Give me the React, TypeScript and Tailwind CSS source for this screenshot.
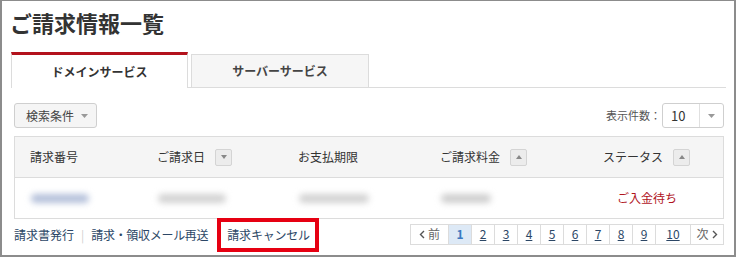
const font = 'font-["Meiryo","Noto_Sans_CJK_JP",sans-serif]';

function SortButton({ dir }: { dir: 'up' | 'down' }) {
  return (
    <span className="ml-[10px] inline-flex h-[17px] w-[17px] items-center justify-center rounded-[2px] border border-[#d4d4d4] bg-[#ececec]">
      <svg width="6" height="4" viewBox="0 0 6 4">
        {dir === 'down' ? (
          <path d="M0 0 L6 0 L3 4 Z" fill="#888" />
        ) : (
          <path d="M0 4 L6 4 L3 0 Z" fill="#888" />
        )}
      </svg>
    </span>
  );
}

function Caret() {
  return (
    <svg width="7" height="4" viewBox="0 0 7 4">
      <path d="M0 0 L7 0 L3.5 4 Z" fill="#999" />
    </svg>
  );
}

function Chevron({ left }: { left?: boolean }) {
  return (
    <svg width="6" height="9" viewBox="0 0 6 9">
      <path
        d={left ? 'M5 1 L1.5 4.5 L5 8' : 'M1 1 L4.5 4.5 L1 8'}
        fill="none"
        stroke="#555"
        strokeWidth="1.4"
      />
    </svg>
  );
}

const columns = [
  { label: '請求番号', w: 'w-[127px]' },
  { label: 'ご請求日', w: 'w-[141px]', sort: 'down' as const },
  { label: 'お支払期限', w: 'w-[142px]' },
  { label: 'ご請求料金', w: 'w-[163px]', sort: 'up' as const },
  { label: 'ステータス', w: 'flex-1', sort: 'up' as const },
];

const pages = ['1', '2', '3', '4', '5', '6', '7', '8', '9', '10'];

export default function App() {
  return (
    <div
      className={`${font} h-[257px] w-[736px] overflow-hidden border-2 border-t border-[#8c8c8c] bg-white pl-[8px] pt-[6px] text-[#333]`}
    >
      <h1 className="h-[30px] text-[22px] font-bold leading-[30px] text-[#333]">ご請求情報一覧</h1>

      {/* Tabs */}
      <div className="ml-[1px] mt-[16px] flex h-[35px] w-[715px] items-end border-b border-[#dcdcdc]">
        <div className="-mb-px flex h-[36px] w-[177px] items-center justify-center border-x border-t-[3px] border-x-[#dcdcdc] border-t-[#b3121c] bg-white text-[12px] font-bold">
          ドメインサービス
        </div>
        <div className="ml-[3px] flex h-[33px] w-[178px] items-center justify-center border-x border-t border-[#dcdcdc] bg-[#f6f6f6] text-[12px] font-bold text-[#444]">
          サーバーサービス
        </div>
      </div>

      <div className="ml-[4px] w-[710px]">
        {/* Filters */}
        <div className="mt-[15px] flex h-[25px] items-center justify-between">
          <button className="flex h-[25px] items-center gap-[7px] rounded-[3px] border border-[#cfcfcf] bg-[#f5f5f5] pl-[11px] pr-[8px] text-[12px] text-[#444]">
            検索条件
            <Caret />
          </button>
          <div className="flex items-center">
            <span className="text-[11px] text-[#555]">表示件数：</span>
            <div className="ml-[1px] flex h-[25px] w-[62px] items-center rounded-[3px] border border-[#cfcfcf] bg-white">
              <span className="flex-1 pl-[8px] text-[13px] text-[#333]">10</span>
              <span className="flex h-full w-[24px] items-center justify-center border-l border-[#e0e0e0]">
                <Caret />
              </span>
            </div>
          </div>
        </div>

        {/* Table */}
        <div className="mt-[8px] border border-[#dcdcdc]">
          <div className="flex h-[41px] items-center border-b border-[#dcdcdc] bg-[#f5f5f5] text-[12px] text-[#333]">
            {columns.map((c) => (
              <div key={c.label} className={`${c.w} flex items-center pl-[15px]`}>
                {c.label}
                {c.sort && <SortButton dir={c.sort} />}
              </div>
            ))}
          </div>
          <div className="flex h-[40px] items-center text-[12px]">
            <div className="w-[127px] pl-[16px]">
              <div className="h-[9px] w-[58px] rounded-full bg-[#b4c0da] blur-[3px]" />
            </div>
            <div className="w-[141px] pl-[16px]">
              <div className="h-[9px] w-[68px] rounded-full bg-[#d2d2d2] blur-[3px]" />
            </div>
            <div className="w-[142px] pl-[16px]">
              <div className="h-[9px] w-[70px] rounded-full bg-[#d2d2d2] blur-[3px]" />
            </div>
            <div className="w-[163px] pl-[16px]">
              <div className="h-[9px] w-[50px] rounded-full bg-[#cecece] blur-[3px]" />
            </div>
            <div className="flex-1 pl-[29px] text-[12px] text-[#b0141e]">ご入金待ち</div>
          </div>
        </div>

        {/* Footer */}
        <div className="-mt-px flex h-[34px] items-center justify-between">
          <div className="flex items-center text-[12px] text-[#2c4766]">
            <a>請求書発行</a>
            <span className="mx-[7px] text-[#cfcfcf]">|</span>
            <a className="tracking-[-0.3px]">請求・領収メール再送</a>
            <a className="ml-[9px] flex h-[34px] items-center border-4 border-[#e60012] pl-[6px] pr-[5px] tracking-[-0.2px]">
              請求キャンセル
            </a>
          </div>
          <div className="-mt-[2px] flex h-[21px] border border-[#dcdcdc] text-[12px]">
            <span className="flex w-[37px] items-center justify-center gap-[3px] text-[#666]">
              <Chevron left />前
            </span>
            {pages.map((p) => (
              <span
                key={p}
                className={`flex items-center justify-center border-l border-[#dcdcdc] ${
                  p === '10' ? 'w-[35px]' : 'w-[23px]'
                } ${p === '1' ? 'bg-[#dde9f6] font-bold text-[#3b78c0]' : 'text-[#2c4766] underline'}`}
              >
                {p}
              </span>
            ))}
            <span className="flex w-[33px] items-center justify-center gap-[3px] border-l border-[#dcdcdc] text-[#666]">
              次<Chevron />
            </span>
          </div>
        </div>
      </div>
    </div>
  );
}
